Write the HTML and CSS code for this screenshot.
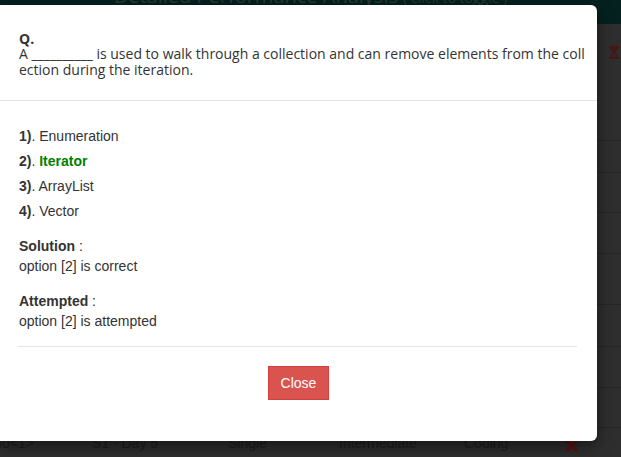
FILE: index.html
```html
<!DOCTYPE html>
<html>
<head>
<meta charset="utf-8">
<link rel="stylesheet" href="styles.css">
</head>
<body>
<div class="page">
  <header class="topbar">
    <h1 class="title">Detailed Performance Analysis <small>( click to toggle )</small></h1>
  </header>
  <div class="rows">
    <div class="row r1">
      <svg class="hourglass" width="10" height="13" viewBox="0 0 10 13">
        <rect x="0" y="0" width="10" height="1.6" fill="#4d1414"/>
        <rect x="0" y="11.4" width="10" height="1.6" fill="#4d1414"/>
        <path d="M1.2 1.6 L8.8 1.6 L5.4 6.5 L8.8 11.4 L1.2 11.4 L4.6 6.5 Z" fill="none" stroke="#4d1414" stroke-width="1.2"/>
        <path d="M2.2 2.2 L7.8 2.2 L5 5.8 Z" fill="#4d1414"/>
      </svg>
    </div>
    <div class="row r2"></div>
    <div class="row r3"></div>
    <div class="row r4"></div>
    <div class="row r5"></div>
    <div class="row r6"></div>
    <div class="row r7"></div>
    <div class="row r8"></div>
    <div class="row last">
      <span class="c1">lo&lt;1&gt;</span>
      <span class="c2">S1 - Day 5</span>
      <span class="c3">Single</span>
      <span class="c4">Intermediate</span>
      <span class="c5">Coding</span>
      <span class="c6">
        <svg width="13" height="12" viewBox="0 0 13 12">
          <path d="M2 1.5 L11 10.5 M11 1.5 L2 10.5" stroke="#5a1212" stroke-width="3.2" stroke-linecap="square"/>
        </svg>
      </span>
    </div>
  </div>
</div>

<div class="modal">
  <div class="modal-header">
    <div class="q-label">Q.</div>
    <div class="q-text">A __________ is used to walk through a collection and can remove elements from the collection during the iteration.</div>
  </div>
  <div class="modal-body">
    <div class="options">
      <div class="option"><b>1)</b>. Enumeration</div>
      <div class="option"><b>2)</b>. <b class="correct">Iterator</b></div>
      <div class="option"><b>3)</b>. ArrayList</div>
      <div class="option"><b>4)</b>. Vector</div>
    </div>
    <div class="result">
      <div><b>Solution</b> :</div>
      <div>option [2] is correct</div>
    </div>
    <div class="result">
      <div><b>Attempted</b> :</div>
      <div>option [2] is attempted</div>
    </div>
    <hr class="divider">
  </div>
  <div class="modal-footer">
    <button class="btn-close">Close</button>
  </div>
</div>
</body>
</html>
```
FILE: styles.css
```css
html, body {
  margin: 0;
  padding: 0;
}
body {
  background: #2e2e2e;
  width: 621px;
  height: 457px;
  overflow: hidden;
  font-family: "Liberation Sans", Arial, sans-serif;
  font-size: 14px;
  line-height: 20px;
  color: #333;
}
.page {
  width: 621px;
}
.topbar {
  height: 24px;
  background: #04211f;
  overflow: hidden;
}
.title {
  margin: -14px 0 0 0;
  text-align: center;
  font-family: "Open Sans", sans-serif;
  font-weight: 400;
  font-size: 20px;
  line-height: 20px;
  color: #2c3836;
}
.title small {
  font-size: 14px;
}
.rows {
  display: flex;
  flex-direction: column;
}
.row {
  border-bottom: 1px solid #262626;
  box-sizing: content-box;
}
.r1 {
  height: 94px;
  padding-top: 22px;
  display: flex;
  justify-content: flex-end;
  padding-right: 2px;
}
.r2 { height: 31px; }
.r3 { height: 39px; }
.r4 { height: 40px; }
.r5 { height: 50px; }
.r6 { height: 41px; }
.r7 { height: 40px; }
.r8 { height: 39px; }
.last {
  border-bottom: none;
  padding-top: 5px;
  display: grid;
  grid-template-columns: 93px 136px 111px 125px 101px auto;
  color: #1c1c1c;
  margin-left: -1px;
  white-space: nowrap;
}
.c6 {
  padding-top: 7px;
  line-height: 0;
}
.modal {
  position: absolute;
  left: 0;
  top: 5px;
  width: 597px;
  background: #fff;
  border-radius: 0 6px 6px 0;
  box-shadow: 0 5px 15px rgba(0, 0, 0, 0.5);
}
.modal-header {
  padding: 26px 10px 23px 19px;
  border-bottom: 1px solid #e5e5e5;
  font-family: "Open Sans", sans-serif;
  font-size: 14px;
  line-height: 15.4px;
  color: #333;
}
.q-label {
  font-weight: 700;
}
.q-text {
  word-break: break-all;
}
.modal-body {
  padding: 15px 20px 0 19px;
}
.options {
  padding-top: 10px;
}
.option {
  margin-bottom: 5px;
}
.correct {
  color: #008000;
}
.result {
  margin-top: 15px;
}
.divider {
  margin: 15px 0 0 -1px;
  border: 0;
  border-top: 1px solid #e5e5e5;
  height: 0;
}
.modal-footer {
  padding: 19px 0 41px;
  display: flex;
  justify-content: center;
}
.btn-close {
  font-family: "Liberation Sans", Arial, sans-serif;
  font-size: 14px;
  line-height: 20px;
  padding: 6px 12px;
  color: #fff;
  background: #d9534f;
  border: 1px solid #d43f3a;
  border-radius: 0;
  margin: 0;
}
```
